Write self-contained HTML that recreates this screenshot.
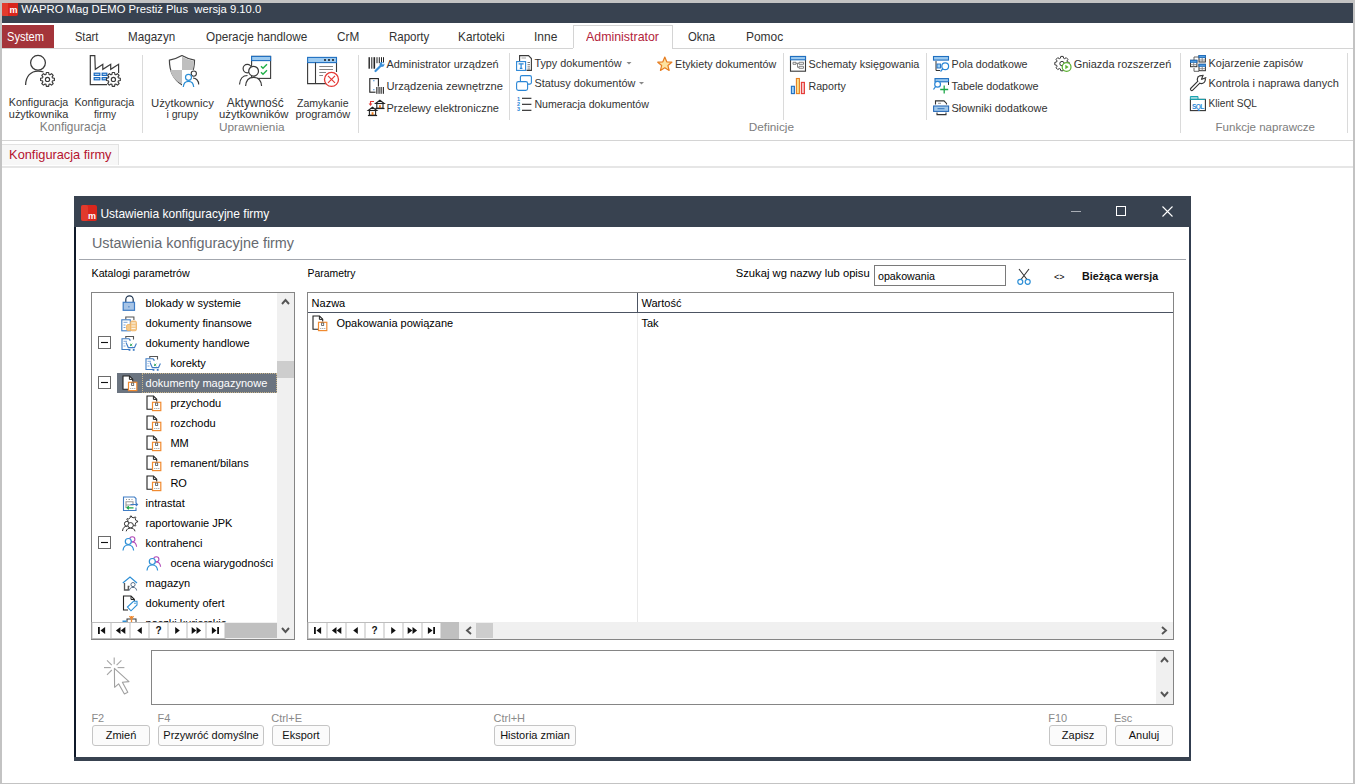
<!DOCTYPE html>
<html><head><meta charset="utf-8"><style>
html,body{margin:0;padding:0;width:1355px;height:784px;overflow:hidden;background:#fff;}
body{position:relative;font-family:"Liberation Sans",sans-serif;}
.t{position:absolute;white-space:nowrap;line-height:20px;font-family:"Liberation Sans",sans-serif;}
.r{position:absolute;display:block;}
</style></head><body>
<div class="r" style="left:0px;top:0px;width:1355px;height:3px;background:#c3c3c3"></div>
<div class="r" style="left:0px;top:0px;width:2px;height:784px;background:#c3c3c3"></div>
<div class="r" style="left:1353px;top:0px;width:2px;height:784px;background:#c3c3c3"></div>
<div class="r" style="left:0px;top:783px;width:1355px;height:1px;background:#c3c3c3"></div>
<div class="r" style="left:2px;top:3px;width:1351px;height:20px;background:#384250"></div>
<svg class="r" style="left:2px;top:3px" width="16" height="13" viewBox="0 0 16 13"><rect x="0" y="-3" width="16" height="16" rx="2" fill="#d9261c"/><rect x="0" y="-3" width="6" height="16" fill="#ea4a3a" opacity=".6"/><text x="11.5" y="10" font-family="Liberation Sans" font-weight="bold" font-size="9" fill="#fff" text-anchor="middle">m</text></svg>
<div class="t" style="left:21.30px;top:-1px;font-size:11.27px;color:#ffffff;">WAPRO Mag DEMO Prestiż Plus&nbsp; wersja 9.10.0</div>
<div class="r" style="left:2px;top:48px;width:571px;height:1px;background:#d4d4d4"></div>
<div class="r" style="left:672px;top:48px;width:681px;height:1px;background:#d4d4d4"></div>
<div class="r" style="left:573px;top:25px;width:1px;height:23px;background:#d4d4d4"></div>
<div class="r" style="left:672px;top:25px;width:1px;height:23px;background:#d4d4d4"></div>
<div class="r" style="left:573px;top:25px;width:100px;height:1px;background:#d4d4d4"></div>
<div class="r" style="left:2px;top:25px;width:52px;height:23px;background:#a4343a"></div>
<div class="t" style="left:7.10px;top:27px;font-size:13px;color:#ffffff;transform:scaleX(0.8512);transform-origin:0 0;">System</div>
<div class="t" style="left:75.30px;top:27px;font-size:13px;color:#333;transform:scaleX(0.8488);transform-origin:0 0;">Start</div>
<div class="t" style="left:128.40px;top:27px;font-size:13px;color:#333;transform:scaleX(0.8948);transform-origin:0 0;">Magazyn</div>
<div class="t" style="left:205.80px;top:27px;font-size:13px;color:#333;transform:scaleX(0.9036);transform-origin:0 0;">Operacje handlowe</div>
<div class="t" style="left:336.50px;top:27px;font-size:13px;color:#333;transform:scaleX(0.9043);transform-origin:0 0;">CrM</div>
<div class="t" style="left:388.70px;top:27px;font-size:13px;color:#333;transform:scaleX(0.8857);transform-origin:0 0;">Raporty</div>
<div class="t" style="left:458.00px;top:27px;font-size:13px;color:#333;transform:scaleX(0.9084);transform-origin:0 0;">Kartoteki</div>
<div class="t" style="left:534.00px;top:27px;font-size:13px;color:#333;transform:scaleX(0.9209);transform-origin:0 0;">Inne</div>
<div class="t" style="left:586.00px;top:27px;font-size:13px;color:#b3233b;transform:scaleX(0.9530);transform-origin:0 0;">Administrator</div>
<div class="t" style="left:688.40px;top:27px;font-size:13px;color:#333;transform:scaleX(0.8682);transform-origin:0 0;">Okna</div>
<div class="t" style="left:745.80px;top:27px;font-size:13px;color:#333;transform:scaleX(0.9197);transform-origin:0 0;">Pomoc</div>
<div class="r" style="left:2px;top:140px;width:1351px;height:1px;background:#d4d4d4"></div>
<div class="r" style="left:142px;top:55px;width:1px;height:78px;background:#dadada"></div>
<div class="r" style="left:358px;top:55px;width:1px;height:78px;background:#dadada"></div>
<div class="r" style="left:509px;top:53px;width:1px;height:67px;background:#dadada"></div>
<div class="r" style="left:783px;top:53px;width:1px;height:67px;background:#dadada"></div>
<div class="r" style="left:926px;top:53px;width:1px;height:67px;background:#dadada"></div>
<div class="r" style="left:1180px;top:53px;width:1px;height:80px;background:#dadada"></div>
<div class="r" style="left:1347px;top:53px;width:1px;height:80px;background:#dadada"></div>
<div class="t" style="left:8.80px;top:92.3px;font-size:10.71px;color:#333333;">Konfiguracja</div>
<div class="t" style="left:8.80px;top:103.5px;font-size:10.94px;color:#333333;">użytkownika</div>
<div class="t" style="left:74.40px;top:92.3px;font-size:10.77px;color:#333333;">Konfiguracja</div>
<div class="t" style="left:94.00px;top:104.5px;font-size:10.24px;color:#333333;">firmy</div>
<div class="t" style="left:39.80px;top:117px;font-size:11.88px;color:#7d7d7d;">Konfiguracja</div>
<div class="t" style="left:151.00px;top:92.6px;font-size:11.34px;color:#333333;">Użytkownicy</div>
<div class="t" style="left:166.40px;top:103.6px;font-size:10.6px;color:#333333;">i grupy</div>
<div class="t" style="left:226.70px;top:92.6px;font-size:11.91px;color:#333333;">Aktywność</div>
<div class="t" style="left:219.00px;top:103.6px;font-size:11.28px;color:#333333;">użytkowników</div>
<div class="t" style="left:297.00px;top:92.6px;font-size:10.55px;color:#333333;">Zamykanie</div>
<div class="t" style="left:295.40px;top:103.6px;font-size:10.96px;color:#333333;">programów</div>
<div class="t" style="left:219.00px;top:117px;font-size:11.81px;color:#7d7d7d;">Uprawnienia</div>
<div class="t" style="left:386.40px;top:54px;font-size:10.92px;color:#333333;">Administrator urządzeń</div>
<div class="t" style="left:386.40px;top:76px;font-size:11.16px;color:#333333;">Urządzenia zewnętrzne</div>
<div class="t" style="left:386.40px;top:98px;font-size:11.01px;color:#333333;">Przelewy elektroniczne</div>
<div class="t" style="left:534.40px;top:52.5px;font-size:10.83px;color:#333333;">Typy dokumentów</div>
<div class="t" style="left:534.40px;top:72.5px;font-size:10.88px;color:#333333;">Statusy dokumentów</div>
<div class="t" style="left:534.40px;top:94px;font-size:10.62px;color:#333333;">Numeracja dokumentów</div>
<div class="t" style="left:675.00px;top:54px;font-size:10.72px;color:#333333;">Etykiety dokumentów</div>
<div class="t" style="left:748.80px;top:117px;font-size:11.79px;color:#7d7d7d;">Definicje</div>
<div class="t" style="left:808.50px;top:54px;font-size:10.85px;color:#333333;">Schematy księgowania</div>
<div class="t" style="left:808.50px;top:76px;font-size:10.63px;color:#333333;">Raporty</div>
<div class="t" style="left:951.50px;top:54px;font-size:10.69px;color:#333333;">Pola dodatkowe</div>
<div class="t" style="left:951.50px;top:76px;font-size:10.81px;color:#333333;">Tabele dodatkowe</div>
<div class="t" style="left:951.50px;top:98px;font-size:10.94px;color:#333333;">Słowniki dodatkowe</div>
<div class="t" style="left:1073.70px;top:54px;font-size:10.97px;color:#333333;">Gniazda rozszerzeń</div>
<div class="t" style="left:1208.50px;top:53px;font-size:10.96px;color:#333333;">Kojarzenie zapisów</div>
<div class="t" style="left:1208.50px;top:73px;font-size:11.0px;color:#333333;">Kontrola i naprawa danych</div>
<div class="t" style="left:1208.50px;top:94px;font-size:10.14px;color:#333333;">Klient SQL</div>
<div class="t" style="left:1215.50px;top:117px;font-size:11.55px;color:#7d7d7d;">Funkcje naprawcze</div>
<div class="r" style="left:2px;top:144px;width:117px;height:21px;background:#f7f7f7;border-top:1px solid #e2e2e2;border-right:1px solid #e2e2e2;box-sizing:border-box"></div>
<div class="r" style="left:2px;top:166px;width:1351px;height:2px;background:#e6e6e6"></div>
<div class="t" style="left:9.10px;top:145px;font-size:12.81px;color:#b5122e;">Konfiguracja firmy</div>
<div class="r" style="left:74px;top:196px;width:1117px;height:31px;background:#384250"></div>
<div class="r" style="left:74px;top:227px;width:2px;height:534px;background:#0f1929"></div>
<div class="r" style="left:1189px;top:227px;width:2px;height:534px;background:#313d4f"></div>
<div class="r" style="left:74px;top:757px;width:1117px;height:4px;background:#384250"></div>
<svg class="r" style="left:81px;top:205px" width="16" height="16" viewBox="0 0 16 16"><rect width="16" height="16" rx="2" fill="#d9261c"/><rect width="7" height="16" rx="2" fill="#ea4a3a" opacity=".55"/><text x="11" y="14" font-family="Liberation Sans" font-weight="bold" font-size="9" fill="#fff" text-anchor="middle">m</text></svg>
<div class="t" style="left:100.40px;top:204px;font-size:12.02px;color:#ffffff;">Ustawienia konfiguracyjne firmy</div>
<div class="r" style="left:1071px;top:211px;width:10px;height:1px;background:#a8adb5"></div>
<div class="r" style="left:1116px;top:206px;width:10px;height:10px;border:1px solid #fff;box-sizing:border-box"></div>
<svg class="r" style="left:1162px;top:206px" width="11" height="11" viewBox="0 0 11 11"><path d="M0.5 0.5L10.5 10.5M10.5 0.5L0.5 10.5" stroke="#fff" stroke-width="1.1"/></svg>
<div class="t" style="left:91.90px;top:233px;font-size:14.39px;color:#666a70;">Ustawienia konfiguracyjne firmy</div>
<div class="r" style="left:79px;top:259px;width:1107px;height:1px;background:#a3a7ae"></div>
<div class="t" style="left:91.50px;top:263.3px;font-size:10.73px;color:#000;">Katalogi parametrów</div>
<div class="t" style="left:307.60px;top:264.3px;font-size:10.4px;color:#000;">Parametry</div>
<div class="t" style="left:735.80px;top:263.3px;font-size:11.21px;color:#000;">Szukaj wg nazwy lub opisu</div>
<div class="r" style="left:874px;top:265px;width:132px;height:21px;border:1px solid #7a7a7a;box-sizing:border-box;background:#fff"></div>
<div class="t" style="left:878.00px;top:266px;font-size:10.68px;color:#000;">opakowania</div>
<div class="t" style="left:1054.00px;top:267px;font-size:9px;color:#000;">&lt;&gt;</div>
<div class="t" style="left:1082.00px;top:266px;font-size:10.71px;color:#111;font-weight:bold;">Bieżąca wersja</div>
<div class="r" style="left:91px;top:292px;width:204px;height:348px;border:1px solid #858585;box-sizing:border-box;background:#fff"></div>
<div class="r" style="left:277px;top:293px;width:17px;height:329px;background:#f0f0f0"></div>
<div class="r" style="left:277px;top:361px;width:17px;height:17px;background:#cdcdcd"></div>
<div class="r" style="left:92px;top:622px;width:202px;height:17px;background:#f0f0f0"></div>
<div class="r" style="left:117px;top:373px;width:160px;height:20px;background:#6b7480"></div>
<div class="r" style="left:142px;top:373px;width:135px;height:20px;border:1px dotted #c8b48a;box-sizing:border-box"></div>
<div class="r" style="left:92px;top:293px;width:185px;height:329px;overflow:hidden">
<div class="t" style="left:53.599999999999994px;top:0px;font-size:11px;color:#000;">blokady w systemie</div>
<div class="t" style="left:53.599999999999994px;top:20px;font-size:11px;color:#000;">dokumenty finansowe</div>
<div class="t" style="left:53.599999999999994px;top:40px;font-size:11px;color:#000;">dokumenty handlowe</div>
<div class="t" style="left:78.4px;top:60px;font-size:11px;color:#000;">korekty</div>
<div class="t" style="left:53.599999999999994px;top:80px;font-size:11px;color:#ffffff;">dokumenty magazynowe</div>
<div class="t" style="left:78.4px;top:100px;font-size:11px;color:#000;">przychodu</div>
<div class="t" style="left:78.4px;top:120px;font-size:11px;color:#000;">rozchodu</div>
<div class="t" style="left:78.4px;top:140px;font-size:11px;color:#000;">MM</div>
<div class="t" style="left:78.4px;top:160px;font-size:11px;color:#000;">remanent/bilans</div>
<div class="t" style="left:78.4px;top:180px;font-size:11px;color:#000;">RO</div>
<div class="t" style="left:53.599999999999994px;top:200px;font-size:11px;color:#000;">intrastat</div>
<div class="t" style="left:53.599999999999994px;top:220px;font-size:11px;color:#000;">raportowanie JPK</div>
<div class="t" style="left:53.599999999999994px;top:240px;font-size:11px;color:#000;">kontrahenci</div>
<div class="t" style="left:78.4px;top:260px;font-size:11px;color:#000;">ocena wiarygodności</div>
<div class="t" style="left:53.599999999999994px;top:280px;font-size:11px;color:#000;">magazyn</div>
<div class="t" style="left:53.599999999999994px;top:300px;font-size:11px;color:#000;">dokumenty ofert</div>
<div class="t" style="left:53.599999999999994px;top:320px;font-size:11px;color:#000;">paczki kurierskie</div>
<svg class="r" style="left:0;top:0" width="185" height="329"><path d="M33.8 9 V6.6 A3.7 3.7 0 0 1 41.2 6.6 V9" fill="none" stroke="#1f3550" stroke-width="1.2"/><rect x="31.2" y="9.3" width="11.3" height="8" fill="#a7c4e6" stroke="#3f7cc4" stroke-width="1.2"/><rect x="36.3" y="13.2" width="1.2" height="1.2" fill="#3f7cc4"/><path d="M33.8 26.6 V24 H41.9 V27" fill="none" stroke="#555" stroke-width="1.1"/><rect x="29.8" y="26.8" width="8.5" height="11" fill="#fff" stroke="#3f7cc4" stroke-width="1.1"/><path d="M31.5 29.3 H35.5 M31.5 32 H33.5 M31.5 34.5 H33.5" stroke="#6a9ad6" stroke-width="0.9"/><rect x="34.5" y="31.5" width="5" height="6" rx="1.5" fill="#f3c88a" stroke="#f0b060" stroke-width="0.8"/><rect x="38.5" y="28" width="6" height="9.8" rx="1.5" fill="#f3c88a" stroke="#f0b060" stroke-width="0.8"/><path d="M39.5 30 H43.5 M39.5 33 H43.5 M39.5 35.5 H43.5" stroke="#fff" stroke-width="0.8"/><path d="M33.8 45.5 V43.5 H41.5 V46.5" fill="none" stroke="#555" stroke-width="1.1"/><path d="M38 56.5 H30 V45.8 H37 L38 46.8 V48" fill="#fff" stroke="#3f7cc4" stroke-width="1.1"/><path d="M31.5 48.3 H35 M31.5 50.6 H32.5 M31.5 53 H33.5" stroke="#6a9ad6" stroke-width="0.9"/><path d="M34 49.5 L36.3 54.6 H42.5 L44.4 50.5" fill="#fff" stroke="#3f7cc4" stroke-width="1.1"/><path d="M38 50.8 L40.3 53 M40.3 50.8 L38 53" stroke="#27a35a" stroke-width="0.9"/><rect x="36.6" y="56" width="1.8" height="1.8" fill="#3f7cc4"/><rect x="40.8" y="56" width="1.8" height="1.8" fill="#3f7cc4"/><rect x="6.5" y="43.5" width="12" height="12" fill="#fff" stroke="#6a6a6a" stroke-width="1"/><line x1="9" y1="49.5" x2="16" y2="49.5" stroke="#111" stroke-width="1.1"/><path d="M57.8 65.5 V63.5 H65.5 V66.5" fill="none" stroke="#555" stroke-width="1.1"/><path d="M62 76.5 H54 V65.8 H61 L62 66.8 V68" fill="#fff" stroke="#3f7cc4" stroke-width="1.1"/><path d="M55.5 68.3 H59 M55.5 70.6 H56.5 M55.5 73 H57.5" stroke="#6a9ad6" stroke-width="0.9"/><path d="M58 69.5 L60.3 74.6 H66.5 L68.4 70.5" fill="#fff" stroke="#3f7cc4" stroke-width="1.1"/><path d="M62 70.8 L64.3 73 M64.3 70.8 L62 73" stroke="#27a35a" stroke-width="0.9"/><rect x="60.6" y="76" width="1.8" height="1.8" fill="#3f7cc4"/><rect x="64.8" y="76" width="1.8" height="1.8" fill="#3f7cc4"/><path d="M36 96.3 H31 V83 H37.5 L40.7 86.2 V88.5" fill="#fff" stroke="#222" stroke-width="1.1"/><path d="M37.4 83.2 V86.4 H40.5" fill="none" stroke="#222" stroke-width="1"/><rect x="36.5" y="89.3" width="8.3" height="8.3" fill="#fff" stroke="#f08a30" stroke-width="1.2"/><rect x="39.6" y="90" width="2.1" height="2.5" fill="none" stroke="#555" stroke-width="0.8"/><path d="M38.3 95.5 h1 M40.3 95.5 h1 M42.3 95.5 h1" stroke="#888" stroke-width="0.9"/><rect x="6.5" y="83.5" width="12" height="12" fill="#fff" stroke="#6a6a6a" stroke-width="1"/><line x1="9" y1="89.5" x2="16" y2="89.5" stroke="#111" stroke-width="1.1"/><path d="M60 116.3 H55 V103 H61.5 L64.7 106.2 V108.5" fill="#fff" stroke="#222" stroke-width="1.1"/><path d="M61.4 103.2 V106.4 H64.5" fill="none" stroke="#222" stroke-width="1"/><rect x="60.5" y="109.3" width="8.3" height="8.3" fill="#fff" stroke="#f08a30" stroke-width="1.2"/><rect x="63.6" y="110" width="2.1" height="2.5" fill="none" stroke="#555" stroke-width="0.8"/><path d="M62.3 115.5 h1 M64.3 115.5 h1 M66.3 115.5 h1" stroke="#888" stroke-width="0.9"/><path d="M60 136.3 H55 V123 H61.5 L64.7 126.2 V128.5" fill="#fff" stroke="#222" stroke-width="1.1"/><path d="M61.4 123.2 V126.4 H64.5" fill="none" stroke="#222" stroke-width="1"/><rect x="60.5" y="129.3" width="8.3" height="8.3" fill="#fff" stroke="#f08a30" stroke-width="1.2"/><rect x="63.6" y="130" width="2.1" height="2.5" fill="none" stroke="#555" stroke-width="0.8"/><path d="M62.3 135.5 h1 M64.3 135.5 h1 M66.3 135.5 h1" stroke="#888" stroke-width="0.9"/><path d="M60 156.3 H55 V143 H61.5 L64.7 146.2 V148.5" fill="#fff" stroke="#222" stroke-width="1.1"/><path d="M61.4 143.2 V146.4 H64.5" fill="none" stroke="#222" stroke-width="1"/><rect x="60.5" y="149.3" width="8.3" height="8.3" fill="#fff" stroke="#f08a30" stroke-width="1.2"/><rect x="63.6" y="150" width="2.1" height="2.5" fill="none" stroke="#555" stroke-width="0.8"/><path d="M62.3 155.5 h1 M64.3 155.5 h1 M66.3 155.5 h1" stroke="#888" stroke-width="0.9"/><path d="M60 176.3 H55 V163 H61.5 L64.7 166.2 V168.5" fill="#fff" stroke="#222" stroke-width="1.1"/><path d="M61.4 163.2 V166.4 H64.5" fill="none" stroke="#222" stroke-width="1"/><rect x="60.5" y="169.3" width="8.3" height="8.3" fill="#fff" stroke="#f08a30" stroke-width="1.2"/><rect x="63.6" y="170" width="2.1" height="2.5" fill="none" stroke="#555" stroke-width="0.8"/><path d="M62.3 175.5 h1 M64.3 175.5 h1 M66.3 175.5 h1" stroke="#888" stroke-width="0.9"/><path d="M60 196.3 H55 V183 H61.5 L64.7 186.2 V188.5" fill="#fff" stroke="#222" stroke-width="1.1"/><path d="M61.4 183.2 V186.4 H64.5" fill="none" stroke="#222" stroke-width="1"/><rect x="60.5" y="189.3" width="8.3" height="8.3" fill="#fff" stroke="#f08a30" stroke-width="1.2"/><rect x="63.6" y="190" width="2.1" height="2.5" fill="none" stroke="#555" stroke-width="0.8"/><path d="M62.3 195.5 h1 M64.3 195.5 h1 M66.3 195.5 h1" stroke="#888" stroke-width="0.9"/><path d="M44 210 V205.5 L42.5 204 H31.5 V217.5 H44 V214.5" fill="#fff" stroke="#3f7cc4" stroke-width="1.1"/><path d="M34 206.5 h1 M36.5 206.5 h1.5 M39.5 206.5 h1" stroke="#999" stroke-width="1"/><path d="M34 215 V208.8 H41 V212 H34" fill="none" stroke="#999" stroke-width="1.1"/><path d="M38.5 211.5 H45.5 M43.8 210 L45.5 211.5 L43.8 213" fill="none" stroke="#3f7cc4" stroke-width="1.1"/><path d="M35 214.8 H41.5 M36.8 213.2 L35 214.8 L36.8 216.4" fill="none" stroke="#1fa84a" stroke-width="1.2"/><path d="M44.13 227.71 L45.57 227.95 L45.57 229.05 L44.13 229.29 L43.19 231.23 L43.91 232.51 L43.04 233.20 L41.96 232.22 L39.85 232.70 L39.30 234.06 L38.22 233.81 L38.31 232.35 L36.62 231.00 L35.22 231.42 L34.74 230.42 L35.94 229.58 L35.94 227.42 L34.74 226.58 L35.22 225.58 L36.62 226.00 L38.31 224.65 L38.22 223.19 L39.30 222.94 L39.85 224.30 L41.96 224.78 L43.04 223.80 L43.91 224.49 L43.19 225.77Z" fill="#fff" stroke="#333" stroke-width="1.0" stroke-linejoin="round"/><circle cx="34.8" cy="230.8" r="2.4" fill="#fff" stroke="#333" stroke-width="1"/><path d="M30.5 238 C31 234.5 32.5 233.3 34.8 233.3" fill="none" stroke="#333" stroke-width="1"/><circle cx="38.6" cy="232.3" r="2.7" fill="#fff" stroke="#333" stroke-width="1"/><path d="M34.2 238.3 C34.6 236 36.3 235.2 38.6 235.2 C40.9 235.2 42.6 236 43 238.3" fill="#fff" stroke="#333" stroke-width="1"/><circle cx="40.3" cy="246.3" r="2.6" fill="none" stroke="#b04ab8" stroke-width="1.1"/><path d="M40.3 249 C42.8 249 44.3 251 44.6 253.8" fill="none" stroke="#b04ab8" stroke-width="1.1"/><circle cx="36.3" cy="248.5" r="3" fill="#fff" stroke="#2d8fd6" stroke-width="1.2"/><path d="M31 257.5 C31.3 254 33.3 252 36.3 252 C39.3 252 41.3 254 41.6 257.5" fill="none" stroke="#2d8fd6" stroke-width="1.2"/><rect x="6.5" y="243.5" width="12" height="12" fill="#fff" stroke="#6a6a6a" stroke-width="1"/><line x1="9" y1="249.5" x2="16" y2="249.5" stroke="#111" stroke-width="1.1"/><circle cx="64.3" cy="266.3" r="2.6" fill="none" stroke="#b04ab8" stroke-width="1.1"/><path d="M64.3 269 C66.8 269 68.3 271 68.6 273.8" fill="none" stroke="#b04ab8" stroke-width="1.1"/><circle cx="60.3" cy="268.5" r="3" fill="#fff" stroke="#2d8fd6" stroke-width="1.2"/><path d="M55 277.5 C55.3 274 57.3 272 60.3 272 C63.3 272 65.3 274 65.6 277.5" fill="none" stroke="#2d8fd6" stroke-width="1.2"/><path d="M30.8 290 L38 284 L45 290" fill="none" stroke="#2d8fd6" stroke-width="1.2"/><path d="M32.5 290 V297 H36.3 V293.5 H37.5" fill="none" stroke="#555" stroke-width="1.3"/><circle cx="41" cy="291.6" r="2.1" fill="none" stroke="#5a7088" stroke-width="1"/><path d="M37.4 297.5 C37.7 295.2 39 294.4 41 294.4 C43 294.4 44.3 295.2 44.6 297.5" fill="none" stroke="#5a7088" stroke-width="1"/><path d="M36 317 H31.5 V303 H39 L42.3 306.3 V308" fill="#fff" stroke="#222" stroke-width="1.1"/><path d="M39 303.2 V306.5 H42.2" fill="none" stroke="#222" stroke-width="1"/><path d="M35.5 314 L41.5 308.3 H45 V312 L39 317.8 Z" fill="#fff" stroke="#2d8fd6" stroke-width="1.1"/><circle cx="43" cy="310.3" r="0.8" fill="#2d8fd6"/><rect x="35" y="326" width="9" height="11" fill="#fff" stroke="#333" stroke-width="1"/><path d="M39.5 323 V337 M37.5 323 L39.5 326 L41.5 323" fill="none" stroke="#f08a30" stroke-width="1.3"/><rect x="30.5" y="327.5" width="4" height="2" fill="#2d8fd6"/></svg>
</div>
<div class="r" style="left:307px;top:292px;width:867px;height:348px;border:1px solid #858585;box-sizing:border-box;background:#fff"></div>
<div class="r" style="left:308px;top:312px;width:865px;height:1px;background:#4c5462"></div>
<div class="r" style="left:637px;top:293px;width:1px;height:19px;background:#4c5462"></div>
<div class="r" style="left:637px;top:313px;width:1px;height:309px;background:#e9e9e9"></div>
<div class="t" style="left:311.60px;top:293px;font-size:11px;color:#000;">Nazwa</div>
<div class="t" style="left:641.50px;top:293px;font-size:11px;color:#000;">Wartość</div>
<div class="t" style="left:336.40px;top:313px;font-size:11px;color:#000;">Opakowania powiązane</div>
<div class="t" style="left:641.50px;top:313px;font-size:11px;color:#000;">Tak</div>
<div class="r" style="left:440px;top:622px;width:19px;height:17px;background:#c0c0c0"></div>
<div class="r" style="left:459px;top:622px;width:714px;height:17px;background:#f0f0f0"></div>
<div class="r" style="left:476px;top:623px;width:17px;height:15px;background:#cdcdcd"></div>
<div class="r" style="left:225px;top:623px;width:52px;height:15px;background:#c0c0c0"></div>
<div class="r" style="left:151px;top:650px;width:1023px;height:55px;border:1px solid #858585;box-sizing:border-box;background:#fff"></div>
<div class="r" style="left:1156px;top:651px;width:17px;height:53px;background:#f0f0f0"></div>
<div class="t" style="left:91.40px;top:708px;font-size:11px;color:#8a8a8a;">F2</div>
<div class="t" style="left:157.60px;top:708px;font-size:11px;color:#8a8a8a;">F4</div>
<div class="t" style="left:271.20px;top:708px;font-size:11px;color:#8a8a8a;">Ctrl+E</div>
<div class="t" style="left:493.60px;top:708px;font-size:11px;color:#8a8a8a;">Ctrl+H</div>
<div class="t" style="left:1048.20px;top:708px;font-size:11px;color:#8a8a8a;">F10</div>
<div class="t" style="left:1114.00px;top:708px;font-size:11px;color:#8a8a8a;">Esc</div>
<div class="r" style="left:92px;top:725px;width:58px;height:21px;border:1px solid #c5c5c5;border-radius:3px;box-sizing:border-box;background:#fbfbfb"></div>
<div class="t" style="left:-79.0px;width:400px;text-align:center;top:724.5px;font-size:11px;color:#111;">Zmień</div>
<div class="r" style="left:158px;top:725px;width:106px;height:21px;border:1px solid #c5c5c5;border-radius:3px;box-sizing:border-box;background:#fbfbfb"></div>
<div class="t" style="left:11.0px;width:400px;text-align:center;top:724.5px;font-size:11px;color:#111;">Przywróć domyślne</div>
<div class="r" style="left:272px;top:725px;width:58px;height:21px;border:1px solid #c5c5c5;border-radius:3px;box-sizing:border-box;background:#fbfbfb"></div>
<div class="t" style="left:101.0px;width:400px;text-align:center;top:724.5px;font-size:11px;color:#111;">Eksport</div>
<div class="r" style="left:494px;top:725px;width:82px;height:21px;border:1px solid #c5c5c5;border-radius:3px;box-sizing:border-box;background:#fbfbfb"></div>
<div class="t" style="left:335.0px;width:400px;text-align:center;top:724.5px;font-size:11px;color:#111;">Historia zmian</div>
<div class="r" style="left:1049px;top:725px;width:58px;height:21px;border:1px solid #c5c5c5;border-radius:3px;box-sizing:border-box;background:#fbfbfb"></div>
<div class="t" style="left:878.0px;width:400px;text-align:center;top:724.5px;font-size:11px;color:#111;">Zapisz</div>
<div class="r" style="left:1115px;top:725px;width:58px;height:21px;border:1px solid #c5c5c5;border-radius:3px;box-sizing:border-box;background:#fbfbfb"></div>
<div class="t" style="left:944.0px;width:400px;text-align:center;top:724.5px;font-size:11px;color:#111;">Anuluj</div>
<svg class="r" style="left:0;top:0" width="1355" height="784"><path d="M282.0 304.0 L285.5 300.0 L289.0 304.0" fill="none" stroke="#555" stroke-width="1.9"/><path d="M282.0 628.0 L285.5 632.0 L289.0 628.0" fill="none" stroke="#555" stroke-width="1.9"/><rect x="92.0" y="622.5" width="133" height="16" fill="#fff" stroke="#bdbdbd" stroke-width="1"/><line x1="111.0" y1="622" x2="111.0" y2="639" stroke="#bdbdbd" stroke-width="1"/><line x1="130.0" y1="622" x2="130.0" y2="639" stroke="#bdbdbd" stroke-width="1"/><line x1="149.0" y1="622" x2="149.0" y2="639" stroke="#bdbdbd" stroke-width="1"/><line x1="168.0" y1="622" x2="168.0" y2="639" stroke="#bdbdbd" stroke-width="1"/><line x1="187.0" y1="622" x2="187.0" y2="639" stroke="#bdbdbd" stroke-width="1"/><line x1="206.0" y1="622" x2="206.0" y2="639" stroke="#bdbdbd" stroke-width="1"/><rect x="98.0" y="627.0" width="1.8" height="7" fill="#111"/><path d="M105.1 627.0 L100.5 630.5 L105.1 634.0Z" fill="#111"/><path d="M120.5 627.0 L115.9 630.5 L120.5 634.0Z" fill="#111"/><path d="M125.3 627.0 L120.7 630.5 L125.3 634.0Z" fill="#111"/><path d="M141.8 627.0 L137.2 630.5 L141.8 634.0Z" fill="#111"/><text x="158.5" y="634.3" font-family="Liberation Sans" font-weight="bold" font-size="10" fill="#111" text-anchor="middle">?</text><path d="M175.2 627.0 L179.8 630.5 L175.2 634.0Z" fill="#111"/><path d="M191.7 627.0 L196.3 630.5 L191.7 634.0Z" fill="#111"/><path d="M196.5 627.0 L201.10000000000002 630.5 L196.5 634.0Z" fill="#111"/><path d="M211.89999999999998 627.0 L216.5 630.5 L211.89999999999998 634.0Z" fill="#111"/><rect x="217.2" y="627.0" width="1.8" height="7" fill="#111"/><rect x="308.0" y="622.5" width="133" height="16" fill="#fff" stroke="#bdbdbd" stroke-width="1"/><line x1="327.0" y1="622" x2="327.0" y2="639" stroke="#bdbdbd" stroke-width="1"/><line x1="346.0" y1="622" x2="346.0" y2="639" stroke="#bdbdbd" stroke-width="1"/><line x1="365.0" y1="622" x2="365.0" y2="639" stroke="#bdbdbd" stroke-width="1"/><line x1="384.0" y1="622" x2="384.0" y2="639" stroke="#bdbdbd" stroke-width="1"/><line x1="403.0" y1="622" x2="403.0" y2="639" stroke="#bdbdbd" stroke-width="1"/><line x1="422.0" y1="622" x2="422.0" y2="639" stroke="#bdbdbd" stroke-width="1"/><rect x="314.0" y="627.0" width="1.8" height="7" fill="#111"/><path d="M321.1 627.0 L316.5 630.5 L321.1 634.0Z" fill="#111"/><path d="M336.5 627.0 L331.9 630.5 L336.5 634.0Z" fill="#111"/><path d="M341.3 627.0 L336.7 630.5 L341.3 634.0Z" fill="#111"/><path d="M357.8 627.0 L353.2 630.5 L357.8 634.0Z" fill="#111"/><text x="374.5" y="634.3" font-family="Liberation Sans" font-weight="bold" font-size="10" fill="#111" text-anchor="middle">?</text><path d="M391.2 627.0 L395.8 630.5 L391.2 634.0Z" fill="#111"/><path d="M407.7 627.0 L412.3 630.5 L407.7 634.0Z" fill="#111"/><path d="M412.5 627.0 L417.1 630.5 L412.5 634.0Z" fill="#111"/><path d="M427.9 627.0 L432.5 630.5 L427.9 634.0Z" fill="#111"/><rect x="433.2" y="627.0" width="1.8" height="7" fill="#111"/><path d="M471.0 627.0 L467.0 630.5 L471.0 634.0" fill="none" stroke="#555" stroke-width="1.9"/><path d="M1162.0 627.0 L1166.0 630.5 L1162.0 634.0" fill="none" stroke="#555" stroke-width="1.9"/><path d="M318 329.3 H313 V316 H319.5 L322.7 319.2 V321.5" fill="#fff" stroke="#222" stroke-width="1.1"/><path d="M319.4 316.2 V319.4 H322.5" fill="none" stroke="#222" stroke-width="1"/><rect x="318.5" y="322.3" width="8.3" height="8.3" fill="#fff" stroke="#f08a30" stroke-width="1.2"/><rect x="321.6" y="323" width="2.1" height="2.5" fill="none" stroke="#555" stroke-width="0.8"/><path d="M320.3 328.5 h1 M322.3 328.5 h1 M324.3 328.5 h1" stroke="#888" stroke-width="0.9"/><path d="M1161.0 662.0 L1164.5 658.0 L1168.0 662.0" fill="none" stroke="#555" stroke-width="1.9"/><path d="M1161.0 692.0 L1164.5 696.0 L1168.0 692.0" fill="none" stroke="#555" stroke-width="1.9"/><path d="M1019 269 L1027 279.5 M1029 269 L1021 279.5" stroke="#333" stroke-width="1.1"/><circle cx="1020.3" cy="281.8" r="2.5" fill="none" stroke="#2d8fd6" stroke-width="1.2"/><circle cx="1027.7" cy="281.8" r="2.5" fill="none" stroke="#2d8fd6" stroke-width="1.2"/><line x1="110.80" y1="667.60" x2="104.00" y2="667.60" stroke="#a5a5a5" stroke-width="1.1"/><line x1="111.80" y1="665.20" x2="106.99" y2="660.39" stroke="#a5a5a5" stroke-width="1.1"/><line x1="114.20" y1="664.20" x2="114.20" y2="657.40" stroke="#a5a5a5" stroke-width="1.1"/><line x1="116.60" y1="665.20" x2="121.41" y2="660.39" stroke="#a5a5a5" stroke-width="1.1"/><line x1="117.60" y1="667.60" x2="124.40" y2="667.60" stroke="#a5a5a5" stroke-width="1.1"/><line x1="111.80" y1="670.00" x2="106.99" y2="674.81" stroke="#a5a5a5" stroke-width="1.1"/><path d="M114.4 668.4 L114.6 687.3 L118.6 683.8 L124.4 693.9 L127.8 692.3 L122.4 682.2 L129 681.6 Z" fill="#fff" stroke="#a0a0a0" stroke-width="1.1" stroke-linejoin="round"/><circle cx="38" cy="62.8" r="7.4" fill="#fff" stroke="#3a3a3a" stroke-width="1.25"/><path d="M25.6 85 C25.8 76 31 71 38 71 C40 71 42 71.3 43.5 72" fill="none" stroke="#3a3a3a" stroke-width="1.25"/><path d="M52.48 77.89 L54.41 78.25 L54.41 80.55 L52.48 80.91 L52.09 81.85 L53.20 83.47 L51.57 85.10 L49.95 83.99 L49.01 84.38 L48.65 86.31 L46.35 86.31 L45.99 84.38 L45.05 83.99 L43.43 85.10 L41.80 83.47 L42.91 81.85 L42.52 80.91 L40.59 80.55 L40.59 78.25 L42.52 77.89 L42.91 76.95 L41.80 75.33 L43.43 73.70 L45.05 74.81 L45.99 74.42 L46.35 72.49 L48.65 72.49 L49.01 74.42 L49.95 74.81 L51.57 73.70 L53.20 75.33 L52.09 76.95Z" fill="#fff" stroke="#3a3a3a" stroke-width="1.15" stroke-linejoin="round"/><circle cx="47.5" cy="79.4" r="2.1" fill="none" stroke="#3a3a3a" stroke-width="1.15"/><path d="M107 84.6 L90.3 84.6 L90.3 55.6 L94.8 55.6 L95.3 69.3 L102.8 64.3 L102.8 69.3 L110.7 64.3 L110.7 69.3 L118.6 64.3 L118.6 73" fill="none" stroke="#3a3a3a" stroke-width="1.2" stroke-linejoin="miter"/><rect x="94.2" y="73.2" width="5.599999999999994" height="2.2" fill="#cfe4f7" stroke="#1a6ac0" stroke-width="1.2"/><rect x="94.2" y="77.6" width="5.599999999999994" height="2.2" fill="#cfe4f7" stroke="#1a6ac0" stroke-width="1.2"/><rect x="102.2" y="73.2" width="4.599999999999994" height="2.2" fill="#cfe4f7" stroke="#1a6ac0" stroke-width="1.2"/><rect x="102.2" y="77.6" width="4.599999999999994" height="2.2" fill="#cfe4f7" stroke="#1a6ac0" stroke-width="1.2"/><path d="M118.38 77.89 L120.31 78.25 L120.31 80.55 L118.38 80.91 L117.99 81.85 L119.10 83.47 L117.47 85.10 L115.85 83.99 L114.91 84.38 L114.55 86.31 L112.25 86.31 L111.89 84.38 L110.95 83.99 L109.33 85.10 L107.70 83.47 L108.81 81.85 L108.42 80.91 L106.49 80.55 L106.49 78.25 L108.42 77.89 L108.81 76.95 L107.70 75.33 L109.33 73.70 L110.95 74.81 L111.89 74.42 L112.25 72.49 L114.55 72.49 L114.91 74.42 L115.85 74.81 L117.47 73.70 L119.10 75.33 L117.99 76.95Z" fill="#fff" stroke="#3a3a3a" stroke-width="1.15" stroke-linejoin="round"/><circle cx="113.4" cy="79.4" r="2.1" fill="none" stroke="#3a3a3a" stroke-width="1.15"/><path d="M181.9 55.6 C177 58.5 173 59.6 169.4 60.2 C169.4 71 173 79 181.9 84.8 C190.8 79 194.5 71 194.5 60.2 C191 59.6 186.8 58.5 181.9 55.6Z" fill="#fff" stroke="#444" stroke-width="1.2"/><path d="M182 56.6 C186.5 59.2 190.5 60.4 193.8 60.9 C193.8 64 193.5 67 193 70 L182 70Z" fill="#bfbfbf"/><path d="M182 70 L170.4 70 C171.5 76 175 81 182 84 Z" fill="#bfbfbf"/><rect x="182" y="70" width="14" height="18" fill="#fff"/><circle cx="193.8" cy="73.6" r="2.6" fill="#fff" stroke="#3a3a3a" stroke-width="1.1"/><path d="M193 78 C196 78 198.7 80.5 198.7 84.5" fill="none" stroke="#3a3a3a" stroke-width="1.1"/><circle cx="188.5" cy="77.3" r="3" fill="#fff" stroke="#2d8fd6" stroke-width="1.2"/><path d="M183.3 87 C183.6 83 185.6 81.3 188.5 81.3 C191.4 81.3 193.4 83 193.7 87" fill="#fff" stroke="#2d8fd6" stroke-width="1.2"/><rect x="251.6" y="56.4" width="19" height="22" fill="#fff" stroke="#3a3a3a" stroke-width="1.1"/><rect x="251.6" y="56.4" width="19" height="4.2" fill="#9ccaf0" stroke="#1f6fc0" stroke-width="1.1"/><path d="M261 66.2 L263 68.3 L267 64.2 M261 72.2 L263 74.3 L267 70.2" fill="none" stroke="#22b04a" stroke-width="1.4"/><circle cx="247.3" cy="68.6" r="4.2" fill="#fff" stroke="#3a3a3a" stroke-width="1.2"/><path d="M239.5 84.5 C240 78.5 243 75.5 247.5 75.5" fill="none" stroke="#3a3a3a" stroke-width="1.2"/><circle cx="253.6" cy="71.2" r="4.9" fill="#fff" stroke="#3a3a3a" stroke-width="1.2"/><path d="M245.6 86 C246 80.5 249 77.3 253.6 77.3 C258.2 77.3 261.2 80.5 261.6 86" fill="#fff" stroke="#3a3a3a" stroke-width="1.2"/><path d="M329 83.6 L307.6 83.6 L307.6 62.5 M336.5 62.5 L336.5 72" fill="none" stroke="#3a3a3a" stroke-width="1.1"/><rect x="307.6" y="57.4" width="28.9" height="5.2" fill="#9ccaf0" stroke="#1f6fc0" stroke-width="1.1"/><line x1="315.5" y1="62.5" x2="315.5" y2="83.6" stroke="#3a3a3a" stroke-width="1.1"/><rect x="324.1" y="59.1" width="1.8" height="1.8" fill="#222"/><rect x="328.1" y="59.1" width="1.8" height="1.8" fill="#222"/><rect x="332.1" y="59.1" width="1.8" height="1.8" fill="#222"/><line x1="319.3" y1="66.5" x2="333" y2="66.5" stroke="#777" stroke-width="0.9"/><line x1="319.3" y1="69.5" x2="333" y2="69.5" stroke="#777" stroke-width="0.9"/><line x1="319.3" y1="72.5" x2="326" y2="72.5" stroke="#777" stroke-width="0.9"/><line x1="319.3" y1="75.5" x2="323" y2="75.5" stroke="#777" stroke-width="0.9"/><circle cx="331.5" cy="79.4" r="7" fill="#fff" stroke="#e53935" stroke-width="1.3"/><path d="M328 75.9 L335 82.9 M335 75.9 L328 82.9" stroke="#e53935" stroke-width="1.2"/><rect x="368.5" y="57.2" width="1.4" height="11.5" fill="#222"/><rect x="371.3" y="57.2" width="1" height="11.5" fill="#222"/><rect x="373.5" y="57.2" width="1.6" height="11.5" fill="#222"/><rect x="376.5" y="57.2" width="1" height="6" fill="#222"/><rect x="378.8" y="57.2" width="1" height="6" fill="#222"/><rect x="381" y="57.2" width="1" height="6" fill="#222"/><rect x="383" y="57.2" width="1" height="6" fill="#222"/><path d="M375.5 71 L381 65.5" stroke="#3a8fd8" stroke-width="2.2" stroke-linecap="round"/><circle cx="382" cy="64.5" r="2.4" fill="#3a8fd8"/><circle cx="383" cy="63.5" r="0.9" fill="#fff"/><rect x="369.8" y="78.6" width="8.6" height="13.6" fill="none" stroke="#222" stroke-width="1.1"/><rect x="373" y="80.4" width="1.6" height="0.8" fill="#2a7fd0"/><rect x="373" y="89.4" width="1.6" height="0.8" fill="#2a7fd0"/><rect x="375.5" y="86.5" width="9" height="7.5" fill="#fff"/><rect x="376.3" y="87" width="1.1" height="6.8" fill="#222"/><rect x="378.5" y="87" width="1.1" height="6.8" fill="#222"/><rect x="380.6" y="87" width="1.1" height="6.8" fill="#222"/><rect x="382.8" y="87" width="1.1" height="6.8" fill="#222"/><path d="M375.6 103.5 L379.90000000000003 100.2 L384.20000000000005 103.5 Z" fill="#fff" stroke="#222" stroke-width="1.1"/><rect x="376.8" y="103.5" width="6.2" height="4.7" fill="#fff" stroke="#222" stroke-width="1.1"/><rect x="379.0" y="105.2" width="1.9" height="3" fill="#f08020"/><line x1="375.3" y1="108.5" x2="384.5" y2="108.5" stroke="#222" stroke-width="1.2"/><path d="M368.2 110.5 L372.5 107.2 L376.8 110.5 Z" fill="#fff" stroke="#222" stroke-width="1.1"/><rect x="369.4" y="110.5" width="6.2" height="4.7" fill="#fff" stroke="#222" stroke-width="1.1"/><rect x="371.59999999999997" y="112.2" width="1.9" height="3" fill="#f08020"/><line x1="367.9" y1="115.5" x2="377.09999999999997" y2="115.5" stroke="#222" stroke-width="1.2"/><path d="M374 101.5 L370.5 101.5 L370.5 104.5" fill="none" stroke="#e53935" stroke-width="1.1"/><path d="M368.6 103.5 L372.4 103.5 L370.5 106Z" fill="#e53935"/><path d="M519.6 61 L519.6 55.6 L528.5 55.6 L531.4 58.5 L531.4 70.4 L526.5 70.4" fill="#fff" stroke="#3a3a3a" stroke-width="1.1"/><line x1="527.5" y1="62.5" x2="530" y2="62.5" stroke="#666" stroke-width="0.9"/><line x1="527.5" y1="64.7" x2="530" y2="64.7" stroke="#666" stroke-width="0.9"/><line x1="527.5" y1="66.9" x2="530" y2="66.9" stroke="#666" stroke-width="0.9"/><line x1="527.5" y1="69" x2="530" y2="69" stroke="#666" stroke-width="0.9"/><line x1="521.5" y1="58" x2="526" y2="58" stroke="#999" stroke-width="0.9"/><rect x="516.6" y="61.6" width="9" height="8.8" fill="#fff" stroke="#2a86d6" stroke-width="1.1"/><path d="M518.6 63.8 H523.6 M521.1 63.8 V68.3 M519.8 68.3 H522.4" stroke="#2a86d6" stroke-width="1.2"/><rect x="520.4" y="75.6" width="11" height="8.5" rx="1.5" fill="#fff" stroke="#2a86d6" stroke-width="1.1"/><rect x="516.6" y="81.6" width="11" height="8.8" rx="1.8" fill="#fff" stroke="#2a86d6" stroke-width="1.1"/><text x="518.5" y="100.6" font-family="Liberation Sans" font-weight="bold" font-size="5.5" fill="#2a86d6" text-anchor="middle">1</text><text x="518.5" y="105.8" font-family="Liberation Sans" font-weight="bold" font-size="5.5" fill="#2a86d6" text-anchor="middle">2</text><text x="518.5" y="111" font-family="Liberation Sans" font-weight="bold" font-size="5.5" fill="#2a86d6" text-anchor="middle">3</text><line x1="522" y1="98.3" x2="531.4" y2="98.3" stroke="#222" stroke-width="1.1"/><line x1="522" y1="104.3" x2="531.4" y2="104.3" stroke="#222" stroke-width="1.1"/><line x1="522" y1="110.3" x2="531.4" y2="110.3" stroke="#222" stroke-width="1.1"/><path d="M664.80 57.10 L666.74 61.83 L671.84 62.21 L667.94 65.52 L669.15 70.49 L664.80 67.80 L660.45 70.49 L661.66 65.52 L657.76 62.21 L662.86 61.83Z" fill="#fde2a0" stroke="#e67e22" stroke-width="1.2" stroke-linejoin="round"/><rect x="790.5" y="56.5" width="15" height="14.7" fill="#fff" stroke="#3a3a3a" stroke-width="1.1"/><rect x="790.5" y="56.5" width="15" height="3.3" fill="#9ccaf0" stroke="#1f6fc0" stroke-width="1.1"/><path d="M793 62.3 h3 v2 h-3z M799 62.3 h4.5 v2 h-4.5z M799 66.3 h4.5 v2 h-4.5z M796 63.3 H799 M797.5 63.3 V67.3 H799" fill="none" stroke="#777" stroke-width="0.9"/><rect x="791.4" y="86.3" width="3" height="7.3" fill="#9fd0f5" stroke="#1f6fc0" stroke-width="1.1"/><rect x="796.4" y="78.5" width="3" height="15.1" fill="#fbe08a" stroke="#e67e22" stroke-width="1.1"/><rect x="801.4" y="82.4" width="3" height="11.2" fill="#f5c6c6" stroke="#e53935" stroke-width="1.1"/><path d="M936 61 V70.5 H940" fill="none" stroke="#333" stroke-width="1"/><rect x="933.5" y="56.5" width="15" height="3.6" fill="#9ccaf0" stroke="#1f6fc0" stroke-width="1.1"/><rect x="937" y="64" width="3.5" height="4" fill="#9fd0f5" stroke="#1f6fc0" stroke-width="0.9"/><circle cx="945.2" cy="66.2" r="3.4" fill="#fff" stroke="#2a86d6" stroke-width="1.2"/><line x1="942.7" y1="68.8" x2="940.5" y2="71.5" stroke="#2a86d6" stroke-width="1.3"/><rect x="935" y="78.6" width="13.5" height="3.2" fill="#9ccaf0" stroke="#1f6fc0" stroke-width="1.1"/><path d="M948.5 82 V85" stroke="#333" stroke-width="1"/><circle cx="937.6" cy="84.2" r="2.9" fill="#fff" stroke="#2a86d6" stroke-width="1.2"/><line x1="935.6" y1="86.5" x2="933.5" y2="89.5" stroke="#2a86d6" stroke-width="1.3"/><path d="M944.2 85.5 V93.5 M940.2 89.5 H948.2" stroke="#1fa84a" stroke-width="1.3"/><path d="M935.5 104.5 V100.9 H944 L946.5 103.4 V104.5 M937 112.6 V114.6 H946 V112.6" fill="none" stroke="#333" stroke-width="1.1"/><line x1="938" y1="103.3" x2="941" y2="103.3" stroke="#888" stroke-width="0.9"/><rect x="933.6" y="106" width="15" height="5.4" fill="#9fc7ea" stroke="#2a6cb8" stroke-width="1.1"/><line x1="937.5" y1="108.7" x2="944.5" y2="108.7" stroke="#2a6cb8" stroke-width="0.9"/><path d="M1067.36 61.97 L1069.20 62.40 L1069.20 64.80 L1067.36 65.23 L1066.94 66.24 L1067.94 67.84 L1066.24 69.54 L1064.64 68.54 L1063.63 68.96 L1063.20 70.80 L1060.80 70.80 L1060.37 68.96 L1059.36 68.54 L1057.76 69.54 L1056.06 67.84 L1057.06 66.24 L1056.64 65.23 L1054.80 64.80 L1054.80 62.40 L1056.64 61.97 L1057.06 60.96 L1056.06 59.36 L1057.76 57.66 L1059.36 58.66 L1060.37 58.24 L1060.80 56.40 L1063.20 56.40 L1063.63 58.24 L1064.64 58.66 L1066.24 57.66 L1067.94 59.36 L1066.94 60.96Z" fill="#fff" stroke="#333" stroke-width="1.0" stroke-linejoin="round"/><circle cx="1062" cy="63.6" r="2.2" fill="none" stroke="#333" stroke-width="1.0"/><circle cx="1066.6" cy="67" r="4.4" fill="#fff" stroke="#5ab030" stroke-width="1.2"/><path d="M1065.3 64.8 L1068.6 67 L1065.3 69.2Z" fill="#5ab030"/><path d="M1194 60 V57 H1199 M1194 68 V71.3 H1199" fill="none" stroke="#555" stroke-width="0.9"/><rect x="1199" y="55.6" width="6.4" height="6.4" fill="#fff" stroke="#333" stroke-width="1"/><rect x="1199" y="55.6" width="6.4" height="2" fill="#5aa7e8" stroke="#1f6fc0" stroke-width="1"/><line x1="1199" y1="60.0" x2="1205.4" y2="60.0" stroke="#777" stroke-width="0.8"/><line x1="1202.2" y1="57.6" x2="1202.2" y2="62.0" stroke="#777" stroke-width="0.8"/><rect x="1190.5" y="60.3" width="6.4" height="6.4" fill="#fff" stroke="#333" stroke-width="1"/><rect x="1190.5" y="60.3" width="6.4" height="2" fill="#5aa7e8" stroke="#1f6fc0" stroke-width="1"/><line x1="1190.5" y1="64.7" x2="1196.9" y2="64.7" stroke="#777" stroke-width="0.8"/><line x1="1193.7" y1="62.3" x2="1193.7" y2="66.7" stroke="#777" stroke-width="0.8"/><rect x="1199" y="64.3" width="6.4" height="6.4" fill="#fff" stroke="#333" stroke-width="1"/><rect x="1199" y="64.3" width="6.4" height="2" fill="#5aa7e8" stroke="#1f6fc0" stroke-width="1"/><line x1="1199" y1="68.7" x2="1205.4" y2="68.7" stroke="#777" stroke-width="0.8"/><line x1="1202.2" y1="66.3" x2="1202.2" y2="70.7" stroke="#777" stroke-width="0.8"/><path d="M1191.8 89.2 L1198.6 82.4" stroke="#333" stroke-width="3.8" stroke-linecap="round"/><circle cx="1201.3" cy="79.6" r="4.6" fill="#333"/><path d="M1191.8 89.2 L1198.6 82.4" stroke="#fff" stroke-width="1.6" stroke-linecap="round"/><circle cx="1201.3" cy="79.6" r="3.4" fill="#fff"/><path d="M1201.3 79.6 L1203.6 74.2 L1207 74.2 L1207 77.3 Z" fill="#fff"/><path d="M1201.3 79.6 L1203.3 74.8 M1201.3 79.6 L1206.3 77.6" stroke="#333" stroke-width="1.1"/><rect x="1190.4" y="99.4" width="15" height="11.2" fill="#fff" stroke="#333" stroke-width="1.1"/><path d="M1190.4 99.4 V96.5 H1198 V99.4" fill="#9fd7dd" stroke="#1aa3b0" stroke-width="1"/><line x1="1190.4" y1="99.4" x2="1205.4" y2="99.4" stroke="#1aa3b0" stroke-width="1.1"/><text x="1197.9" y="108.7" font-family="Liberation Sans" font-weight="bold" font-size="8" fill="#2a86d6" text-anchor="middle" letter-spacing="-0.6" transform="translate(1197.9 0) scale(0.82 1) translate(-1197.9 0)">SQL</text><path d="M626.5 62 L631.5 62 L629 64.5Z" fill="#888"/><path d="M639 82 L644 82 L641.5 84.5Z" fill="#888"/></svg>
</body></html>
